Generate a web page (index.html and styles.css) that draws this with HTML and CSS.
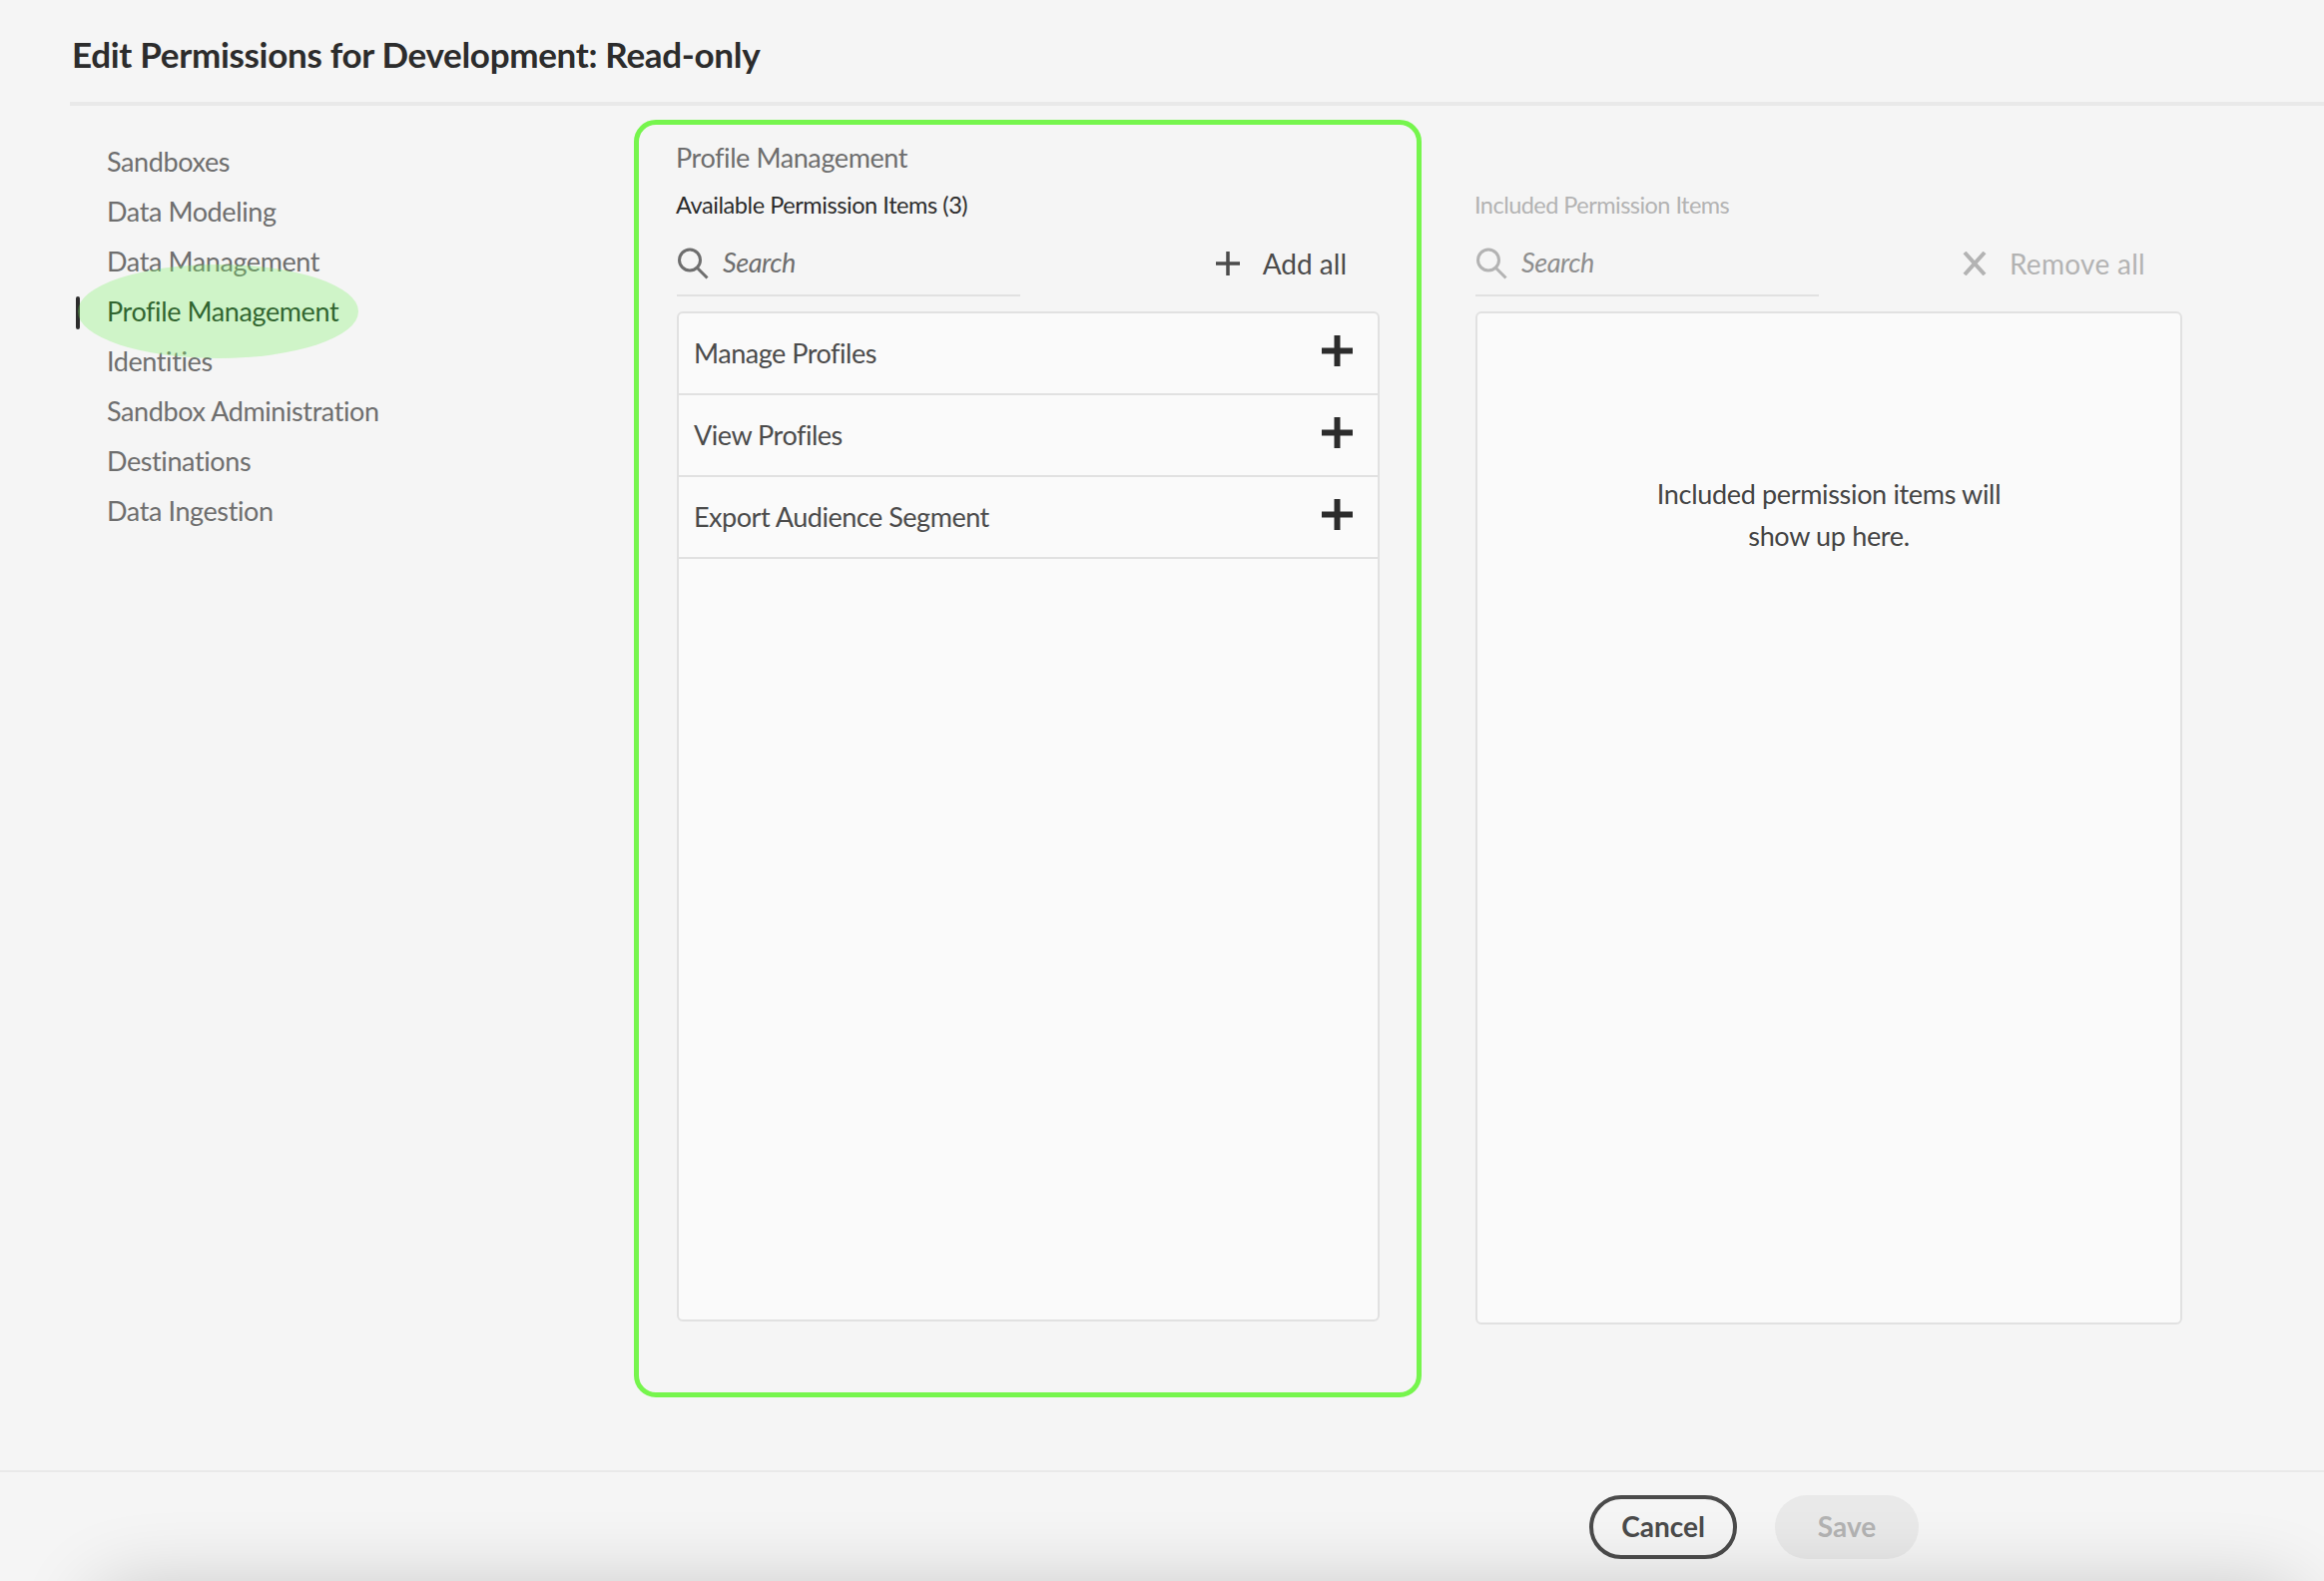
FILE: index.html
```html
<!DOCTYPE html>
<html lang="en">
<head>
    <meta charset="UTF-8">
    <meta name="viewport" content="width=device-width, initial-scale=1.0">
    <title>Edit Permissions</title>
    <link rel="stylesheet" href="styles.css">
</head>
<body>
    <header class="page-header">
        <h1>Edit Permissions for Development: Read-only</h1>
    </header>

    <main class="page-main">
        <nav class="side-nav">
            <a class="nav-item">Sandboxes</a>
            <a class="nav-item">Data Modeling</a>
            <a class="nav-item">Data Management</a>
            <a class="nav-item active">Profile Management</a>
            <a class="nav-item">Identities</a>
            <a class="nav-item">Sandbox Administration</a>
            <a class="nav-item">Destinations</a>
            <a class="nav-item">Data Ingestion</a>
            <div class="nav-highlight"></div>
        </nav>

        <section class="available-panel">
            <h2 class="panel-title">Profile Management</h2>
            <div class="list-label">Available Permission Items (3)</div>
            <div class="search-row">
                <div class="search-field">
                    <svg class="search-icon" viewBox="0 0 32 32"><circle cx="13" cy="12.5" r="10.5"/><line x1="20.5" y1="20.5" x2="30.5" y2="30.5"/></svg>
                    <span class="search-text">Search</span>
                </div>
                <button class="bulk-action" type="button">
                    <svg class="bulk-icon" viewBox="0 0 24 24"><path d="M12 0V24M0 12H24"/></svg>
                    <span>Add all</span>
                </button>
            </div>
            <div class="item-list">
                <div class="item-row">
                    <span>Manage Profiles</span>
                    <svg class="add-icon" viewBox="0 0 31 31"><path d="M15.5 0V31M0 15.5H31"/></svg>
                </div>
                <div class="item-row">
                    <span>View Profiles</span>
                    <svg class="add-icon" viewBox="0 0 31 31"><path d="M15.5 0V31M0 15.5H31"/></svg>
                </div>
                <div class="item-row">
                    <span>Export Audience Segment</span>
                    <svg class="add-icon" viewBox="0 0 31 31"><path d="M15.5 0V31M0 15.5H31"/></svg>
                </div>
            </div>
        </section>

        <section class="included-panel">
            <div class="list-label">Included Permission Items</div>
            <div class="search-row">
                <div class="search-field">
                    <svg class="search-icon" viewBox="0 0 32 32"><circle cx="13" cy="12.5" r="10.5"/><line x1="20.5" y1="20.5" x2="30.5" y2="30.5"/></svg>
                    <span class="search-text">Search</span>
                </div>
                <button class="bulk-action" type="button">
                    <svg class="bulk-icon" viewBox="0 0 24 24"><path d="M2 1L22 23M22 1L2 23"/></svg>
                    <span>Remove all</span>
                </button>
            </div>
            <div class="item-list empty-list">
                <p class="empty-text">Included permission items will<br>show up here.</p>
            </div>
        </section>
    </main>

    <footer class="page-footer">
        <button class="btn btn-cancel" type="button">Cancel</button>
        <button class="btn btn-save" type="button">Save</button>
    </footer>

    <div class="bottom-shadow"></div>
</body>
</html>
```

FILE: styles.css
```css
* {
    box-sizing: border-box;
}
html, body {
    margin: 0;
    height: 100%;
}
body {
    position: relative;
    display: flex;
    flex-direction: column;
    height: 1584px;
    overflow: hidden;
    background-color: #f5f5f5;
    font-family: Lato, "Noto Sans", sans-serif;
    font-variant-ligatures: none;
    color: #4b4b4b;
}
.page-header {
    height: 106px;
    margin-left: 70px;
    border-bottom: 4px solid #e9e9e9;
}
.page-header h1 {
    margin: 0;
    padding: 32px 0 0 2px;
    font-size: 35px;
    line-height: 44px;
    font-weight: 700;
    letter-spacing: -0.31px;
    color: #2c2c2c;
}
.page-main {
    flex: 1;
    display: flex;
    align-items: flex-start;
    padding-top: 14px;
}

/* left nav */
.side-nav {
    position: relative;
    width: 559px;
    margin: 18px 0 0 76px;
    display: flex;
    flex-direction: column;
}
.nav-item {
    display: flex;
    align-items: center;
    height: 50px;
    padding-bottom: 3px;
    font-size: 27px;
    letter-spacing: -0.4px;
    color: #6e6e6e;
}
.nav-item::before {
    content: "";
    width: 4px;
    height: 33px;
    margin: 3px 27px 0 0;
    border-radius: 2px;
}
.nav-item.active {
    color: #12291a;
}
.nav-item.active::before {
    background-color: #2c2c2c;
}
.nav-highlight {
    position: absolute;
    left: 2px;
    top: 127px;
    width: 281px;
    height: 94px;
    border-radius: 50%;
    background-color: rgba(118, 242, 95, 0.3);
}

/* panels */
.available-panel {
    width: 789px;
    height: 1280px;
    padding: 14px 37px 0 38px;
    border: 5px solid #76f54d;
    border-radius: 22px;
}
.included-panel {
    width: 708px;
    margin: 69px 0 0 54px;
}
.panel-title {
    margin: -1px 0 11px -1px;
    font-size: 27px;
    line-height: 40px;
    font-weight: 400;
    letter-spacing: -0.41px;
    color: #6e6e6e;
}
.list-label {
    height: 34px;
    margin-left: -1px;
    font-size: 23.5px;
    line-height: 33px;
    letter-spacing: -0.43px;
    color: #2c2c2c;
}
.included-panel .list-label {
    letter-spacing: -0.53px;
    color: #b3b3b3;
}
.search-row {
    display: flex;
    align-items: center;
    justify-content: space-between;
    margin-top: 17px;
    padding-right: 33px;
}
.included-panel .search-row {
    padding-right: 37px;
}
.search-field {
    display: flex;
    align-items: center;
    width: 344px;
    height: 57px;
    padding: 0 0 8px;
    border-bottom: 2px solid #e1e1e1;
}
.search-icon {
    width: 32px;
    height: 32px;
    margin-right: 14px;
    fill: none;
    stroke: #6e6e6e;
    stroke-width: 3;
}
.search-text {
    padding-bottom: 2px;
    font-size: 27px;
    font-style: italic;
    letter-spacing: -0.45px;
    color: #6e6e6e;
}
.bulk-action {
    display: flex;
    align-items: center;
    gap: 23px;
    padding: 0 0 10px;
    border: none;
    background: none;
    font: inherit;
    font-size: 28px;
    color: #4b4b4b;
}
.bulk-icon {
    width: 24px;
    height: 24px;
    fill: none;
    stroke: #4b4b4b;
    stroke-width: 3.5;
}
.included-panel .search-icon,
.included-panel .bulk-icon {
    stroke: #b3b3b3;
}
.included-panel .bulk-icon {
    stroke-width: 4;
}
.included-panel .search-text {
    color: #8e8e8e;
}
.included-panel .bulk-action {
    letter-spacing: 0.3px;
    color: #b3b3b3;
}
.item-list {
    height: 1012px;
    margin-top: 15px;
    border: 2px solid #e1e1e1;
    border-radius: 6px;
    background-color: #fafafa;
}
.item-row {
    display: flex;
    align-items: center;
    justify-content: space-between;
    height: 82px;
    padding: 0 25px 0 15px;
    border-bottom: 2px solid #e1e1e1;
    font-size: 27px;
    letter-spacing: -0.47px;
    color: #4b4b4b;
}
.item-row span {
    padding-bottom: 2px;
}
.add-icon {
    width: 31px;
    height: 31px;
    margin-bottom: 5px;
    fill: none;
    stroke: #2c2c2c;
    stroke-width: 6;
}
.empty-list {
    height: 1015px;
}
.empty-text {
    margin: 160px 0 0;
    text-align: center;
    font-size: 27px;
    line-height: 42px;
    letter-spacing: -0.33px;
    color: #444444;
}

/* footer */
.page-footer {
    display: flex;
    justify-content: flex-end;
    gap: 38px;
    height: 111px;
    padding: 23px 406px 0 0;
    border-top: 2px solid #e9e9e9;
}
.btn {
    height: 64px;
    padding-bottom: 4px;
    border-radius: 32px;
    font: inherit;
    font-size: 28px;
    font-weight: 700;
}
.btn-cancel {
    width: 148px;
    border: 4px solid #4b4b4b;
    background: none;
    color: #4b4b4b;
}
.btn-save {
    width: 144px;
    border: none;
    background-color: #e9e9e9;
    color: #b3b3b3;
}

/* the dialog's drop shadow, clipped at the window edge */
.bottom-shadow {
    position: absolute;
    left: 0;
    right: 0;
    bottom: 0;
    height: 100px;
    overflow: hidden;
    pointer-events: none;
}
.bottom-shadow::after {
    content: "";
    position: absolute;
    left: 95px;
    right: 25px;
    top: 108px;
    height: 100px;
    border-radius: 30px;
    box-shadow: 0 0 80px rgba(0, 0, 0, 0.2);
}
```
